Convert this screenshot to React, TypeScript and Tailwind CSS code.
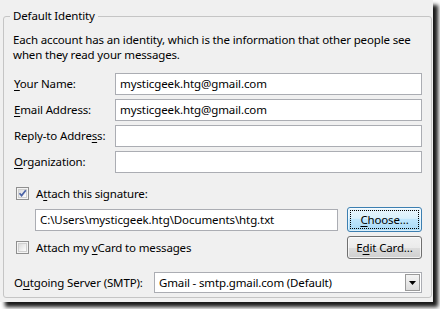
import React from "react";

const font = { fontFamily: '"Noto Sans", "Open Sans", sans-serif' };

function U({ children }: { children: React.ReactNode }) {
  return <span className="underline underline-offset-[2px] decoration-[1px]">{children}</span>;
}

function TextBox({ value, className = "" }: { value?: string; className?: string }) {
  return (
    <div
      className={
        "h-[22px] bg-white border border-[#abadb3] flex items-center pl-[4px] text-[11.5px] tracking-[-0.1px] text-black whitespace-nowrap overflow-hidden " +
        className
      }
    >
      {value}
    </div>
  );
}

function CheckBox({ checked }: { checked?: boolean }) {
  return (
    <div className="w-[13px] h-[13px] border border-[#8f8f8f] bg-[#f4f4f4] p-[1px] shrink-0">
      <div className="w-full h-full border border-[#d0d0d0] bg-gradient-to-br from-[#dcdcdc] to-[#fdfdfd] relative">
        {checked && (
          <svg viewBox="0 0 9 9" className="absolute inset-0 w-[9px] h-[9px] -left-[1px] -top-[1px]">
            <path d="M1.5 4.2 L3.6 6.6 L7.8 1.2" fill="none" stroke="#4b63a6" strokeWidth="1.7" />
          </svg>
        )}
      </div>
    </div>
  );
}

function Row({ label, value }: { label: React.ReactNode; value?: string }) {
  return (
    <div className="flex items-center h-[22px]">
      <div className="w-[102px] pl-[1px] text-black">{label}</div>
      <TextBox value={value} className="w-[307px]" />
    </div>
  );
}

export default function App() {
  return (
    <div className="w-[440px] h-[309px] bg-white relative overflow-hidden text-[11.5px] tracking-[-0.15px]" style={font}>
      <div className="w-[433px] h-[302px] bg-[#f0f0f0] shadow-[5px_5px_4px_rgba(0,0,0,0.9)] pt-[16px] pl-[3px]">
        <div className="relative w-[429px] h-[282px] border border-[#c5c5c5] rounded-[3px] pt-[15px] pl-[9px] pr-[8px]">
          <span className="absolute left-[6px] -top-[9px] px-[3px] bg-[#f0f0f0] leading-[15px] text-black">
            Default Identity
          </span>
          <div className="leading-[15px] text-black">
            Each account has an identity, which is the information that other people see when they read your messages.
          </div>
          <div className="mt-[11px] flex flex-col gap-[4px]">
            <Row label={<><U>Y</U>our Name:</>} value="mysticgeek.htg@gmail.com" />
            <Row label={<><U>E</U>mail Address:</>} value="mysticgeek.htg@gmail.com" />
            <Row label={<>Reply-to Addre<U>s</U>s:</>} />
            <Row label={<><U>O</U>rganization:</>} />
          </div>
          <div className="mt-[14px] flex items-center gap-[7px] pl-[3px] h-[13px] text-black">
            <CheckBox checked />
            <span>A<U>t</U>tach this signature:</span>
          </div>
          <div className="mt-[7px] flex items-center pl-[22px]">
            <TextBox value="C:\Users\mysticgeek.htg\Documents\htg.txt" className="w-[303px] h-[21px]" />
            <div className="ml-[9px] w-[75px] h-[25px] rounded-[3px] border border-[#3c7fb1] p-[2px] bg-[linear-gradient(#eaf6fd_0%,#d9f0fc_45%,#bee6fd_50%,#a7d9f5_100%)] shadow-[inset_0_0_0_1px_rgba(255,255,255,0.6)]">
              <div className="w-full h-full border border-dotted border-black flex items-center justify-center text-black">
                <span><U>C</U>hoose...</span>
              </div>
            </div>
          </div>
          <div className="mt-[4px] flex items-center">
            <div className="flex items-center gap-[7px] pl-[3px] text-black w-[334px]">
              <CheckBox />
              <span>Attach my <U>v</U>Card to messages</span>
            </div>
            <div className="w-[75px] h-[23px] rounded-[3px] border border-[#707070] bg-[linear-gradient(#f2f2f2_0%,#ebebeb_50%,#dddddd_51%,#cfcfcf_100%)] shadow-[inset_0_0_0_1px_rgba(255,255,255,0.7)] flex items-center justify-center text-black">
              <span>E<U>d</U>it Card...</span>
            </div>
          </div>
          <div className="mt-[13px] flex items-center">
            <div className="w-[141px] pl-[1px] text-black">
              O<U>u</U>tgoing Server (SMTP):
            </div>
            <div className="w-[268px] h-[21px] bg-white border border-[#abadb3] flex items-center">
              <span className="flex-1 pl-[4px] text-black whitespace-nowrap">
                Gmail - smtp.gmail.com (Default)
              </span>
              <div className="w-[15px] h-[17px] mr-[1px] border border-[#9a9a9a] bg-[linear-gradient(#f4f4f4,#dcdcdc)] flex items-center justify-center">
                <svg width="7" height="4" viewBox="0 0 7 4">
                  <path d="M0 0 H7 L3.5 4 Z" fill="#000" />
                </svg>
              </div>
            </div>
          </div>
        </div>
      </div>
    </div>
  );
}
